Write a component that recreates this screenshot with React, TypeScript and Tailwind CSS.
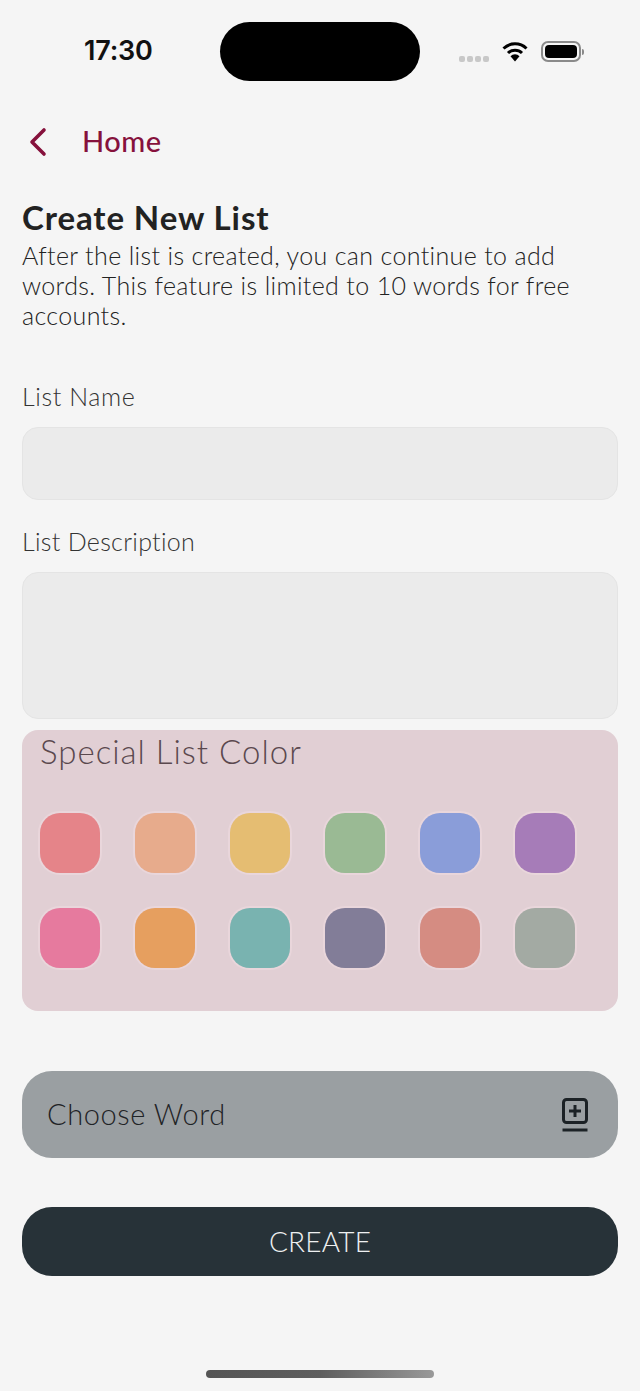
const ROW_ONE = ['#e58489', '#e7ab8c', '#e5bd72', '#9aba94', '#8a9dd9', '#a67cb8'];
const ROW_TWO = ['#e67a9e', '#e69f5f', '#79b3b0', '#827d98', '#d58c82', '#a3aaa3'];

function Swatch({ color }: { color: string }) {
  return (
    <div className="w-[64px] h-[64px] rounded-[22px] border-2 border-[#e9d6db] flex items-center justify-center">
      <div className="w-[60px] h-[60px] rounded-[20px]" style={{ backgroundColor: color }} />
    </div>
  );
}

export default function App() {
  return (
    <div className="w-[640px] h-[1391px] bg-[#f5f5f5] overflow-hidden flex flex-col font-['Lato',sans-serif]">
      {/* Status bar */}
      <div className="h-[59px] mt-[22px] shrink-0 flex items-center">
        <div className="w-[220px] pl-[84px] text-[27px] font-semibold text-[#111] font-['Inter',sans-serif] tracking-[-0.2px]">17:30</div>
        <div className="w-[200px] h-[59px] rounded-[30px] bg-black" />
        <div className="flex items-center pl-[39px]">
          <div className="flex gap-[2px] mt-[14px]">
            <span className="w-[6px] h-[6px] rounded-[2px] bg-[#c8c8c8]" />
            <span className="w-[6px] h-[6px] rounded-[2px] bg-[#c8c8c8]" />
            <span className="w-[6px] h-[6px] rounded-[2px] bg-[#c8c8c8]" />
            <span className="w-[6px] h-[6px] rounded-[2px] bg-[#c8c8c8]" />
          </div>
          <svg className="ml-[13px]" width="26" height="20" viewBox="0 0 26 20" fill="none">
            <path d="M1.5 6.5a16.5 16.5 0 0 1 23 0" stroke="#000" strokeWidth="3" />
            <path d="M6 11a10 10 0 0 1 14 0" stroke="#000" strokeWidth="3" />
            <path d="M8.5 14.3a6 6 0 0 1 9 0L13 19.5z" fill="#000" />
          </svg>
          <div className="ml-[13px] w-[40px] h-[21px] rounded-[7px] border-2 border-[#8a8a8a] p-[2px]">
            <div className="w-full h-full rounded-[4px] bg-black" />
          </div>
          <div className="ml-[1px] w-[2px] h-[6px] rounded-r-full bg-[#8a8a8a]" />
        </div>
      </div>

      {/* Back link */}
      <div className="h-[52px] mt-[35px] shrink-0 flex items-center pl-[26px] gap-[32px]">
        <svg width="24" height="30" viewBox="0 0 24 30" fill="none">
          <path d="M18 3 6 15l12 12" stroke="#86113c" strokeWidth="3.6" strokeLinecap="round" strokeLinejoin="round" />
        </svg>
        <span className="pb-[2px] text-[29px] font-medium text-[#86113c] tracking-[0.5px]">Home</span>
      </div>

      <div className="px-[22px] flex flex-col">
        {/* Heading */}
        <h1 className="mt-[32px] text-[33px] leading-[35px] font-bold text-[#222] tracking-[0.9px]">Create New List</h1>
        <p className="mt-[5px] text-[25px] leading-[30px] font-light text-[#222] tracking-[0.35px]">
          After the list is created, you can continue to add words. This feature is limited to 10 words for free accounts.
        </p>

        {/* Form fields */}
        <label className="mt-[51px] text-[25px] leading-[30px] font-light text-[#333] tracking-[0.6px]">List Name</label>
        <div className="mt-[16px] h-[73px] rounded-[16px] bg-[#ebebeb] border border-[#e4e4e4]" />
        <label className="mt-[26px] text-[25px] leading-[30px] font-light text-[#333] tracking-[0.3px]">List Description</label>
        <div className="mt-[16px] h-[147px] rounded-[16px] bg-[#ebebeb] border border-[#e4e4e4]" />

        {/* Colour picker */}
        <div className="mt-[11px] h-[281px] rounded-[16px] bg-[#e1cfd4] pl-[16px]">
          <div className="pl-[2px] text-[33px] leading-[42px] font-light text-[#5a484e] tracking-[1px]">Special List Color</div>
          <div className="mt-[39px] flex gap-[31px]">
            {ROW_ONE.map(c => <Swatch key={c} color={c} />)}
          </div>
          <div className="mt-[31px] flex gap-[31px]">
            {ROW_TWO.map(c => <Swatch key={c} color={c} />)}
          </div>
        </div>

        {/* Choose word */}
        <div className="mt-[60px] h-[87px] rounded-[30px] bg-[#9a9fa2] flex items-center justify-between pl-[25px] pr-[30px]">
          <span className="pb-[2px] text-[29px] font-light text-[#1f2326] tracking-[0.6px]">Choose Word</span>
          <svg width="26" height="34" viewBox="0 0 26 34" fill="none" stroke="#1c2226" strokeWidth="3">
            <rect x="1.5" y="1.5" width="23" height="23" rx="3" />
            <path d="M13 7v12M7 13h12" />
            <path d="M0.5 32h25" />
          </svg>
        </div>

        {/* Submit */}
        <div className="mt-[49px] h-[69px] rounded-[30px] bg-[#273238] flex items-center justify-center pb-[1px] text-[28px] font-light text-[#eef0f1] tracking-[0.2px]">
          CREATE
        </div>
      </div>

      {/* Home indicator */}
      <div className="mt-[94px] mx-auto w-[228px] h-[8px] rounded-full bg-gradient-to-r from-[#555] via-[#5e5e5e] to-[#999]" />
    </div>
  );
}
